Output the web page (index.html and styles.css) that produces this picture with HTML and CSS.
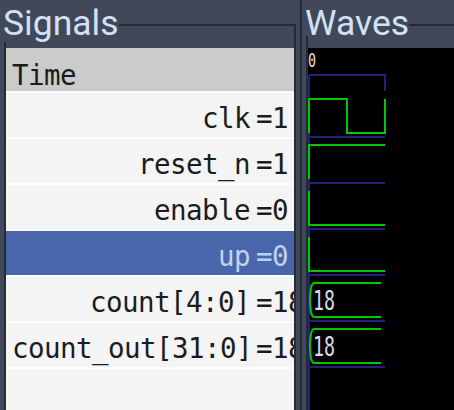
FILE: index.html
```html
<!DOCTYPE html>
<html lang="en">
<head>
<meta charset="utf-8">
<title>Signals and Waves</title>
<link rel="stylesheet" href="styles.css">
</head>
<body>
<div class="panes">
  <section class="frame signals">
    <div class="frame-title">Signals</div>
    <div class="siglist">
      <div class="sighead">Time</div>
      <div class="sigrow"><span class="name">clk</span><span class="val">=1</span></div>
      <div class="sigrow"><span class="name">reset_n</span><span class="val">=1</span></div>
      <div class="sigrow"><span class="name">enable</span><span class="val">=0</span></div>
      <div class="sigrow selected"><span class="name">up</span><span class="val">=0</span></div>
      <div class="sigrow"><span class="name">count[4:0]</span><span class="val">=18</span></div>
      <div class="sigrow"><span class="name">count_out[31:0]</span><span class="val">=18</span></div>
    </div>
  </section>
  <div class="sep"></div>
  <section class="frame waves">
    <div class="frame-title">Waves</div>
    <div class="wavearea">
      <svg class="wavesvg" width="146" height="362" viewBox="0 0 146 362">
        <text class="tick" x="0" y="19" textLength="8" lengthAdjust="spacingAndGlyphs">0</text>
        <path class="grid" d="M1,27 H77 V43 M1,27 V362 M1,89 H77 M1,135 H77 M1,181 H77 M1,227 H77 M1,273 H77 M1,319 H77"/>
        <path class="wave" d="M1,85 V51 H39 V85 H77 V51"/>
        <path class="wave" d="M1,131 V97 H77"/>
        <path class="wave" d="M1,143 V177 H77"/>
        <path class="wave" d="M1,189 V223 H77"/>
        <path class="wave" d="M73,235 H6 C3,235 2,245 2,252 C2,259 3,269 6,269 H73"/>
        <path class="wave" d="M73,281 H6 C3,281 2,291 2,298 C2,305 3,315 6,315 H73"/>
        <text class="busval" x="5" y="262" textLength="22" lengthAdjust="spacingAndGlyphs">18</text>
        <text class="busval" x="5" y="308" textLength="22" lengthAdjust="spacingAndGlyphs">18</text>
      </svg>
    </div>
  </section>
</div>
</body>
</html>
```
FILE: styles.css
```css
* {
  box-sizing: border-box;
}

body {
  margin: 0;
  background: #404859;
  font-family: "Roboto", "Noto Sans", sans-serif;
  overflow: hidden;
}

.panes {
  display: flex;
  width: 454px;
  height: 410px;
  overflow: hidden;
}

.frame {
  position: relative;
  display: flex;
  flex-direction: column;
  margin-top: 24px;
  padding-top: 22px;
  border-top: 2px solid #262a33;
  border-left: 2px solid #262a33;
}

.signals {
  flex: none;
  width: 292px;
  margin-left: 4px;
  border-right: 2px solid #262a33;
}

.sep {
  flex: none;
  width: 2px;
  margin-left: 4px;
  background: #262a33;
}

.waves {
  flex: 1;
  min-width: 0;
  margin-left: 4px;
}

.frame-title {
  position: absolute;
  top: -26px;
  height: 42px;
  padding-top: 2px;
  line-height: 42px;
  font-size: 35.5px;
  color: #d2e2f6;
  background: #404859;
  white-space: nowrap;
}

.signals .frame-title {
  left: -6px;
  padding-left: 3px;
}

.waves .frame-title {
  left: -5px;
  height: 36px;
  padding-left: 2px;
}

.siglist {
  flex: 1;
  background: #f4f4f4;
  font-family: "DejaVu Sans Mono", monospace;
  font-size: 27.5px;
  letter-spacing: -0.55px;
  color: #1c1c1c;
  overflow: hidden;
}

.sighead {
  height: 43px;
  padding: 12px 0 0 6px;
  line-height: 31px;
  background: #cbcbcb;
}

.sigrow {
  display: flex;
  height: 46px;
  padding: 6px 0 0 6px;
  border-top: 2px solid #fcfcfc;
  line-height: 38px;
  white-space: nowrap;
  overflow: hidden;
}

.sigrow:last-child {
  height: 48px;
  border-bottom: 2px solid #fcfcfc;
}

.name {
  flex: none;
  width: 238px;
  text-align: right;
}

.val {
  flex: none;
  margin-left: 6px;
}

.sigrow.selected {
  background: #4866a9;
  color: #bfd3f0;
}

.wavearea {
  flex: 1;
  background: #000;
  overflow: hidden;
}

.wavesvg {
  display: block;
}

.grid {
  fill: none;
  stroke: #22227a;
  stroke-width: 2;
}

.wave {
  fill: none;
  stroke: #00c800;
  stroke-width: 2;
}

.tick {
  font-family: "DejaVu Sans Mono", monospace;
  font-size: 20px;
  fill: #e8e0d4;
}

.busval {
  font-family: "DejaVu Sans Mono", monospace;
  font-size: 26px;
  fill: #d8dce8;
}
```
